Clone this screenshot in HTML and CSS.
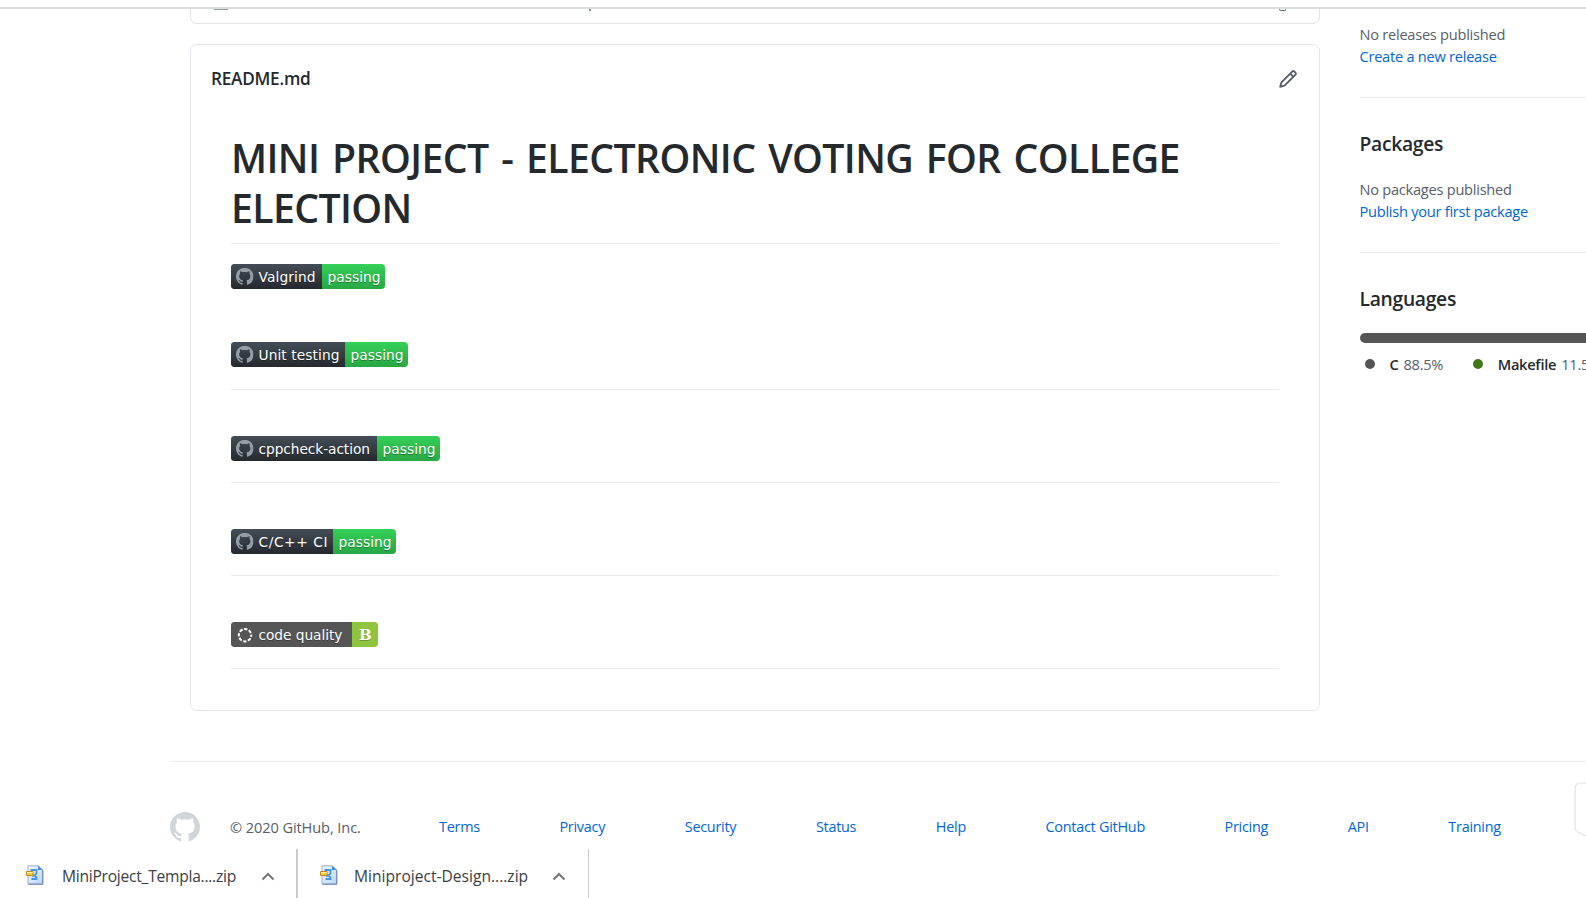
FILE: index.html
```html
<!DOCTYPE html>
<html lang="en">
<head>
<meta charset="utf-8">
<title>README.md</title>
<link rel="stylesheet" href="styles.css">
</head>
<body>
<svg class="defs" width="0" height="0" aria-hidden="true">
  <defs>
    <linearGradient id="dark" x1="0" y1="0" x2="0" y2="1"><stop offset="0" stop-color="#444d56"/><stop offset="1" stop-color="#24292e"/></linearGradient>
    <linearGradient id="green" x1="0" y1="0" x2="0" y2="1"><stop offset="0" stop-color="#34d058"/><stop offset="1" stop-color="#28a745"/></linearGradient>
    <symbol id="mark" viewBox="0 0 16 16"><path fill-rule="evenodd" d="M8 0C3.58 0 0 3.58 0 8c0 3.54 2.29 6.53 5.47 7.59.4.07.55-.17.55-.38 0-.19-.01-.82-.01-1.49-2.01.37-2.53-.49-2.69-.94-.09-.23-.48-.94-.82-1.13-.28-.15-.68-.52-.01-.53.63-.01 1.08.58 1.23.82.72 1.21 1.87.87 2.33.66.07-.52.28-.87.51-1.07-1.78-.2-3.64-.89-3.64-3.95 0-.87.31-1.59.82-2.15-.08-.2-.36-1.02.08-2.12 0 0 .67-.21 2.2.82.64-.18 1.32-.27 2-.27.68 0 1.36.09 2 .27 1.53-1.04 2.2-.82 2.2-.82.44 1.1.16 1.92.08 2.12.51.56.82 1.27.82 2.15 0 3.07-1.87 3.75-3.65 3.95.29.25.54.73.54 1.48 0 1.07-.01 1.93-.01 2.2 0 .21.15.46.55.38A8.013 8.013 0 0016 8c0-4.42-3.58-8-8-8z"/></symbol>
    <linearGradient id="page" x1="0" y1="0" x2="1" y2="1"><stop offset="0" stop-color="#f4f9ff"/><stop offset="1" stop-color="#b5d5f8"/></linearGradient>
    <symbol id="zip" viewBox="0 0 18 20">
      <path d="M2 .8h10.5L16.700 5v14H2z" fill="url(#page)" stroke="#9db0d0"/>
      <path d="M2.500 19.200h14.300V5" fill="none" stroke="#6d7fb0"/>
      <path d="M12 .8V5h4.500z" fill="#3f8fd8"/>
      <path d="M4.500 5h6v3.500L9 9.800v1.400l1.500 1V14H5.500" fill="none" stroke="#4a94d8" stroke-width="1.800"/>
      <path d="M6 9h2.500v3H6z" fill="#6aaae4"/>
      <path d="M.5 6.500h6.500v4H.5z" fill="#f5cf3c" stroke="#c58a1c"/>
      <path d="M1 7.500h5.500" stroke="#fff3a8"/>
    </symbol>
  </defs>
</svg>
<div class="window">
  <div class="toolbar-edge"></div>
  <div class="page">
    <main class="main">
      <section class="files"><i class="bit folder"></i><i class="bit stem"></i><i class="bit tail"></i></section>
      <article class="readme">
        <header class="readme-head">
          <h2>README.md</h2>
          <svg class="pencil" width="20" height="20" viewBox="0 0 16 16"><path fill-rule="evenodd" d="M11.013 1.427a1.75 1.75 0 012.474 0l1.086 1.086a1.75 1.75 0 010 2.474l-8.61 8.61c-.21.21-.47.364-.756.445l-3.251.93a.75.75 0 01-.927-.928l.929-3.25a1.750 1.750 0 01.445-.758l8.610-8.610zm1.414 1.060a.25.25 0 00-.354 0L10.811 3.750l1.439 1.440 1.263-1.263a.25.25 0 000-.354l-1.086-1.086zM11.189 6.250L9.750 4.810l-6.286 6.287a.25.25 0 00-.064.108l-.558 1.953 1.953-.558a.249.249 0 00.108-.064l6.286-6.286z"/></svg>
        </header>
        <div class="markdown">
          <h1>MINI PROJECT - ELECTRONIC VOTING FOR COLLEGE ELECTION</h1>
          <div class="entry first">
            <svg class="badge" width="154" height="25"><rect width="154" height="25" rx="3.750" fill="url(#green)"/><path d="M91 0H3.750A3.750 3.750 0 0 0 0 3.750v17.500A3.750 3.750 0 0 0 3.750 25H91z" fill="url(#dark)"/><use href="#mark" x="5" y="3.750" width="17.500" height="17.500" class="mark"/><g class="shade"><text x="27.500" y="19.250" textLength="57">Valgrind</text><text x="96.500" y="19.250" textLength="53">passing</text></g><text x="27.500" y="18" textLength="57">Valgrind</text><text x="96.500" y="18" textLength="53">passing</text></svg>
          </div>
          <div class="entry ruled">
            <svg class="badge" width="177" height="25"><rect width="177" height="25" rx="3.750" fill="url(#green)"/><path d="M114 0H3.750A3.750 3.750 0 0 0 0 3.750v17.500A3.750 3.750 0 0 0 3.750 25H114z" fill="url(#dark)"/><use href="#mark" x="5" y="3.750" width="17.500" height="17.500" class="mark"/><g class="shade"><text x="27.500" y="19.250" textLength="81">Unit testing</text><text x="119.500" y="19.250" textLength="53">passing</text></g><text x="27.500" y="18" textLength="81">Unit testing</text><text x="119.500" y="18" textLength="53">passing</text></svg>
          </div>
          <div class="entry ruled low">
            <svg class="badge" width="209" height="25"><rect width="209" height="25" rx="3.750" fill="url(#green)"/><path d="M146 0H3.750A3.750 3.750 0 0 0 0 3.750v17.500A3.750 3.750 0 0 0 3.750 25H146z" fill="url(#dark)"/><use href="#mark" x="5" y="3.750" width="17.500" height="17.500" class="mark"/><g class="shade"><text x="27.500" y="19.250" textLength="111.500">cppcheck-action</text><text x="151.500" y="19.250" textLength="53">passing</text></g><text x="27.500" y="18" textLength="111.500">cppcheck-action</text><text x="151.500" y="18" textLength="53">passing</text></svg>
          </div>
          <div class="entry ruled low">
            <svg class="badge" width="165" height="25"><rect width="165" height="25" rx="3.750" fill="url(#green)"/><path d="M102 0H3.750A3.750 3.750 0 0 0 0 3.750v17.500A3.750 3.750 0 0 0 3.750 25H102z" fill="url(#dark)"/><use href="#mark" x="5" y="3.750" width="17.500" height="17.500" class="mark"/><g class="shade"><text x="27.500" y="19.250" textLength="69">C/C++ CI</text><text x="107.500" y="19.250" textLength="53">passing</text></g><text x="27.500" y="18" textLength="69">C/C++ CI</text><text x="107.500" y="18" textLength="53">passing</text></svg>
          </div>
          <div class="entry ruled low">
            <svg class="badge" width="147" height="25"><rect width="147" height="25" rx="3.750" fill="#8fc43f"/><path d="M121 0H3.750A3.750 3.750 0 0 0 0 3.750v17.500A3.750 3.750 0 0 0 3.750 25H121z" fill="#555"/><circle cx="14" cy="13.200" r="6.200" fill="none" stroke="#fff" stroke-width="2" stroke-dasharray="3.400 1.470" stroke-dashoffset="1.700"/><g class="shade"><text x="27.500" y="19.250" textLength="84">code quality</text></g><text x="27.500" y="18" textLength="84">code quality</text><g class="grade"><text x="128" y="19" class="grade-shade">B</text><text x="128" y="18">B</text></g></svg>
          </div>
        </div>
      </article>
    </main>
    <aside class="side">
      <section class="block releases">
        <p>No releases published</p>
        <a>Create a new release</a>
      </section>
      <section class="block">
        <h3>Packages</h3>
        <p>No packages published</p>
        <a>Publish your first package</a>
      </section>
      <section class="block languages">
        <h3>Languages</h3>
        <div class="bar"></div>
        <div class="langs">
          <span class="lang"><i class="dot c"></i><b>C</b> 88.5%</span>
          <span class="lang"><i class="dot make"></i><b>Makefile</b> 11.5%</span>
        </div>
      </section>
    </aside>
  </div>
  <footer class="footer">
    <svg class="logo" width="30" height="30"><use href="#mark" width="30" height="30"/></svg>
    <span class="copy">© 2020 GitHub, Inc.</span>
    <nav class="links"><a>Terms</a><a>Privacy</a><a>Security</a><a>Status</a><a>Help</a><a>Contact GitHub</a><a>Pricing</a><a>API</a><a>Training</a></nav>
    <svg class="popup" width="12" height="56" viewBox="0 0 12 56"><path d="M12 1H7Q1 1 1 7v39q0 4 11 8" fill="#fff" stroke="#dfe4e9" stroke-width="1.200"/></svg>
  </footer>
  <div class="shelf">
    <div class="download"><svg width="18" height="20"><use href="#zip"/></svg><span class="name one">MiniProject_Templa....zip</span><svg class="chev" width="14" height="9"><path d="M1.500 7.500L7 2l5.500 5.500"/></svg></div>
    <div class="download second"><svg width="18" height="20"><use href="#zip"/></svg><span class="name two">Miniproject-Design....zip</span><svg class="chev" width="14" height="9"><path d="M1.500 7.500L7 2l5.500 5.500"/></svg></div>
  </div>
</div>
</body>
</html>
```
FILE: styles.css
```css
* { box-sizing: border-box; }
body { margin: 0; background: #fff; color: #24292e; font-family: "Open Sans", "Noto Sans", sans-serif; font-size: 14.600px; letter-spacing: -.25px; }
h1, h2, h3, p { margin: 0; }
a { color: #0366d6; white-space: nowrap; }
b { font-weight: 600; color: #24292e; }
.defs { position: absolute; }
.window { height: 898px; overflow: hidden; display: flex; flex-direction: column; padding-top: 7px; }
.toolbar-edge { flex: none; height: 2px; background: #dadce0; }
.page { flex: none; display: grid; grid-template-columns: 1130px 400px; column-gap: 39.500px; padding-left: 190px; height: 752px; }
.files { display: flex; height: 15px; border: 1px solid #e1e4e8; border-top: 0; border-radius: 0 0 7px 7px; }
.bit { height: 1px; background: #959da5; }
.folder { width: 14px; margin-left: 23px; }
.stem { width: 2px; height: 2px; margin-left: 361px; background: #7c8aa8; }
.tail { width: 7px; height: 2px; margin-left: 688px; border: 1px solid #6a737d; border-top: 0; border-radius: 0 0 3px 3px; background: none; }
.readme { margin-top: 20px; height: 667px; border: 1px solid #e1e4e8; border-radius: 7px; padding: 19px 20px 0; }
.readme-head { display: flex; justify-content: space-between; align-items: center; height: 30px; }
.readme-head h2 { font-size: 17.200px; font-weight: 600; letter-spacing: -.25px; padding-bottom: 2px; }
.pencil { fill: #586069; margin-right: 1px; }
.markdown { padding: 36px 20px 0; }
.markdown h1 { height: 114px; padding-top: 3px; border-bottom: 1px solid #eaecef; font-size: 39.200px; line-height: 50px; font-weight: 600; letter-spacing: -.6px; word-spacing: 3.200px; }
.entry { display: flex; align-items: flex-start; }
.first { padding-top: 20px; height: 98px; }
.ruled { height: 48px; border-bottom: 1px solid #eaecef; margin-bottom: 45px; }
.low { padding-top: 1px; }
.badge { display: block; font: 13.750px "DejaVu Sans", Verdana, sans-serif; letter-spacing: 0; fill: #fff; }
.mark { fill: #959da5; }
.shade { fill: #010101; opacity: .3; }
.grade { font: bold 15px "DejaVu Serif", serif; }
.grade-shade { fill: #333; opacity: .3; }
.block { height: 155px; border-bottom: 1px solid #eaecef; padding-top: 31px; line-height: 22px; }
.releases { height: 89px; padding-top: 14px; }
.block p { color: #586069; }
.block h3 { font-size: 19.300px; line-height: 30px; font-weight: 600; letter-spacing: -.3px; margin-bottom: 19px; }
.languages { border: 0; }
.bar { height: 10px; border-radius: 5px; background: #555; }
.langs { display: flex; gap: 29.500px; padding: 10px 0 0 5px; color: #586069; }
.lang { display: flex; align-items: center; white-space: nowrap; }
.lang b { margin-right: 5px; }
.dot { width: 10px; height: 10px; border-radius: 50%; margin-right: 15px; }
.c { background: #555; }
.make { background: #427819; }
.footer { flex: none; position: relative; display: flex; align-items: center; height: 88px; margin-left: 170px; border-top: 1px solid #eaecef; padding-top: 42px; }
.logo { fill: #d1d5da; }
.copy { width: 209px; margin-left: 30px; color: #586069; letter-spacing: -.1px; }
.links { display: flex; justify-content: space-between; width: 1062px; font-size: 14.400px; }
.popup { position: absolute; left: 1404px; top: 20px; }
.shelf { flex: none; display: flex; height: 49px; color: #3c4043; font-size: 15.600px; }
.download { display: flex; align-items: center; width: 298px; padding: 5px 0 0 26px; border-right: 2px solid #ccc; }
.download > svg:first-child { margin-top: -3px; }
.second { width: 291px; padding-left: 22px; border-right-width: 1px; }
.name { width: 199px; margin-left: 18px; }
.two { margin-left: 16px; width: 198px; letter-spacing: 0; }
.chev { fill: none; stroke: #757575; stroke-width: 2; }
```
